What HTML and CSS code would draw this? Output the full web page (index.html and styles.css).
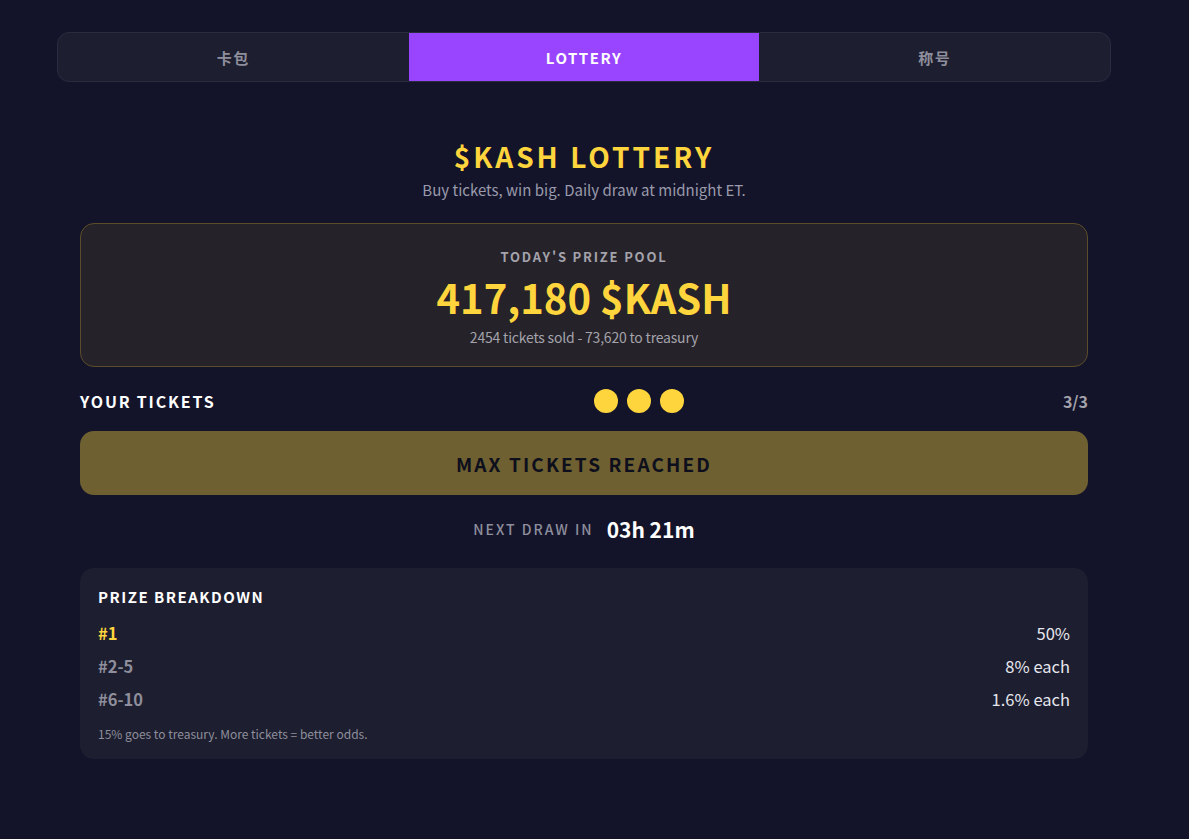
FILE: index.html
```html
<!DOCTYPE html>
<html lang="zh">

<head>
    <meta charset="UTF-8">
    <meta name="viewport" content="width=device-width, initial-scale=1.0">
    <title>$KASH Lottery</title>
    <link rel="stylesheet" href="styles.css">
</head>

<body>
    <div class="page">
        <!-- 상단 탭 -->
        <div class="tabs">
            <div class="tab">卡包</div>
            <div class="tab active">LOTTERY</div>
            <div class="tab">称号</div>
        </div>

        <div class="lottery">
            <div class="head">
                <h1>$KASH LOTTERY</h1>
                <p>Buy tickets, win big. Daily draw at midnight ET.</p>
            </div>

            <!-- 상금 풀 -->
            <div class="pool">
                <div class="pool-label">TODAY'S PRIZE POOL</div>
                <div class="pool-amount">417,180 $KASH</div>
                <div class="pool-sub">2454 tickets sold - 73,620 to treasury</div>
            </div>

            <div class="tickets">
                <span class="tickets-label">YOUR TICKETS</span>
                <div class="dots">
                    <span class="dot"></span>
                    <span class="dot"></span>
                    <span class="dot"></span>
                </div>
                <span class="tickets-count">3/3</span>
            </div>

            <button class="buy" disabled>MAX TICKETS REACHED</button>

            <div class="draw">
                <span class="draw-label">NEXT DRAW IN</span>
                <span class="draw-time">03h 21m</span>
            </div>

            <!-- 상금 분배 -->
            <div class="breakdown">
                <h3>PRIZE BREAKDOWN</h3>
                <div class="row">
                    <span class="rank first">#1</span>
                    <span class="share">50%</span>
                </div>
                <div class="row">
                    <span class="rank">#2-5</span>
                    <span class="share">8% each</span>
                </div>
                <div class="row">
                    <span class="rank">#6-10</span>
                    <span class="share">1.6% each</span>
                </div>
                <p class="note">15% goes to treasury. More tickets = better odds.</p>
            </div>
        </div>
    </div>
</body>

</html>
```

FILE: styles.css
```css
/* 기본 설정 */
body {
    font-family: "Noto Sans CJK SC", "Noto Sans", sans-serif;
    margin: 0;
    padding: 32px 21px 0 0;
    background-color: #13142a;
    color: #ffffff;
}

.page {
    width: 1054px;
    margin: 0 auto;
}

/* 탭 */
.tabs {
    display: flex;
    height: 50px;
    box-sizing: border-box;
    border: 1px solid #2a2b3e;
    border-radius: 12px;
    background-color: #1d1e2f;
    overflow: hidden;
}

.tab {
    flex: 1;
    display: flex;
    align-items: center;
    justify-content: center;
    font-size: 15px;
    font-weight: 700;
    letter-spacing: 1.5px;
    color: #8e8e9c;
}

.tab.active {
    background-color: #9945ff;
    color: #ffffff;
}

.lottery {
    padding: 0 23px;
}

.head {
    text-align: center;
    margin-top: 57px;
}

.head h1 {
    margin: 0;
    font-size: 28px;
    line-height: 34px;
    font-weight: 700;
    letter-spacing: 3px;
    color: #ffd53d;
}

.head p {
    margin: 6px 0 0;
    font-size: 15px;
    line-height: 22px;
    color: #9a9aaa;
}

/* 상금 풀 */
.pool {
    margin-top: 22px;
    height: 144px;
    box-sizing: border-box;
    padding-top: 23px;
    border: 1px solid #5c4d2a;
    border-radius: 14px;
    background-color: #252229;
    text-align: center;
}

.pool-label {
    font-size: 13px;
    line-height: 20px;
    font-weight: 700;
    letter-spacing: 1.8px;
    color: #a4a2ab;
}

.pool-amount {
    font-size: 40px;
    line-height: 50px;
    margin-top: 5px;
    font-weight: 700;
    color: #ffd53d;
}

.pool-sub {
    margin-top: 5px;
    font-size: 14px;
    line-height: 20px;
    color: #a4a2ab;
    letter-spacing: -0.2px;
}

.tickets {
    display: flex;
    justify-content: space-between;
    align-items: center;
    height: 24px;
    margin-top: 22px;
}

.tickets-label {
    font-size: 16px;
    font-weight: 700;
    letter-spacing: 1.8px;
}

.dots {
    display: flex;
    gap: 9px;
}

.dot {
    width: 24px;
    height: 24px;
    border-radius: 50%;
    background-color: #ffd53d;
}

.tickets-count {
    font-size: 16px;
    font-weight: 700;
    color: #a4a2ab;
}

.buy {
    display: block;
    width: 100%;
    height: 64px;
    margin-top: 18px;
    border: none;
    border-radius: 14px;
    background-color: #6f6031;
    font-family: inherit;
    font-size: 19px;
    font-weight: 700;
    letter-spacing: 2.1px;
    color: #0e0f1c;
}

.draw {
    display: flex;
    justify-content: center;
    align-items: center;
    gap: 13px;
    margin-top: 18px;
    height: 32px;
}

.draw-label {
    font-size: 14px;
    font-weight: 500;
    letter-spacing: 2px;
    color: #8e8e9c;
}

.draw-time {
    font-size: 21px;
    font-weight: 700;
    color: #ffffff;
}

/* 상금 분배 */
.breakdown {
    margin-top: 23px;
    padding: 18px 18px 16px;
    border-radius: 14px;
    background-color: #1d1e2f;
}

.breakdown h3 {
    margin: 0 0 9px;
    font-size: 15px;
    line-height: 22px;
    font-weight: 700;
    letter-spacing: 1.5px;
}

.row {
    display: flex;
    justify-content: space-between;
    font-size: 16.5px;
    line-height: 33px;
}

.rank {
    font-weight: 700;
    color: #8e8e9c;
}

.rank.first {
    color: #ffd53d;
}

.share {
    color: #e6e6ee;
}

.note {
    margin: 9px 0 0;
    font-size: 12px;
    line-height: 18px;
    color: #8e8e9c;
}
```
